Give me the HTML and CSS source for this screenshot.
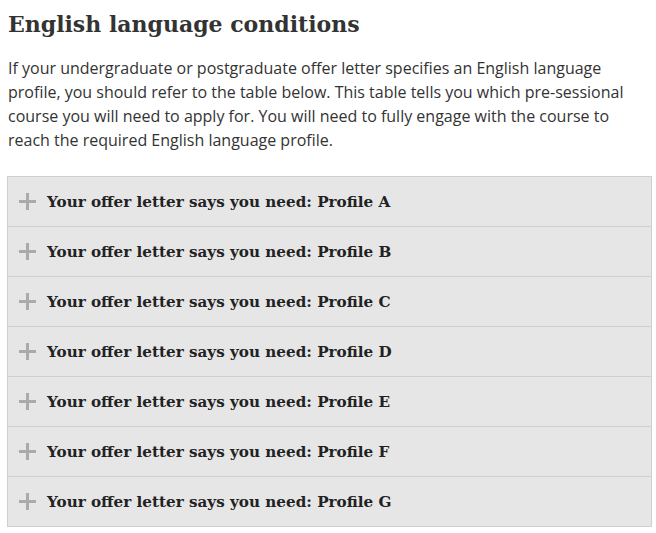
FILE: index.html
```html
<!DOCTYPE html>
<html>
<head>
<meta charset="utf-8">
<link rel="stylesheet" href="styles.css">
</head>
<body>
<h2 class="title">English language conditions</h2>
<p class="intro">If your undergraduate or postgraduate offer letter specifies an English language profile, you should refer to the table below. This table tells you which pre-sessional course you will need to apply for. You will need to fully engage with the course to reach the required English language profile.</p>
<div class="accordion">
  <div class="row"><span class="plus"></span><span class="label">Your offer letter says you need: Profile A</span></div>
  <div class="row"><span class="plus"></span><span class="label">Your offer letter says you need: Profile B</span></div>
  <div class="row"><span class="plus"></span><span class="label">Your offer letter says you need: Profile C</span></div>
  <div class="row"><span class="plus"></span><span class="label">Your offer letter says you need: Profile D</span></div>
  <div class="row"><span class="plus"></span><span class="label">Your offer letter says you need: Profile E</span></div>
  <div class="row"><span class="plus"></span><span class="label">Your offer letter says you need: Profile F</span></div>
  <div class="row"><span class="plus"></span><span class="label">Your offer letter says you need: Profile G</span></div>
</div>
</body>
</html>
```
FILE: styles.css
```css
html, body { background: #fff; }
body {
  margin: 0;
  padding: 8px 4px 0 8px;
  color: #333;
  font-family: "Open Sans", sans-serif;
}
.title {
  margin: 0;
  font-family: "DejaVu Serif", serif;
  font-weight: bold;
  font-size: 22px;
  line-height: 32px;
  color: #333;
}
.intro {
  margin: 16px 0 24px 0;
  font-size: 16px;
  line-height: 24px;
}
.accordion {
  margin-left: -1px;
  border: 1px solid #cfcfcf;
  background: #e6e6e6;
  width: 643px;
}
.row {
  height: 49px;
  display: flex;
  align-items: center;
  border-top: 1px solid #cfcfcf;
  padding-left: 11px;
}
.row:first-child { border-top: none; }
.plus {
  position: relative;
  width: 17px;
  height: 17px;
  margin-right: 11px;
}
.plus::before, .plus::after {
  content: "";
  position: absolute;
  background: #aaa;
}
.plus::before { left: 0; right: 0; top: 7px; height: 3px; }
.plus::after { top: 0; bottom: 0; left: 7px; width: 3px; }
.label {
  font-family: "DejaVu Serif", serif;
  font-weight: bold;
  font-size: 15.2px;
  color: #222;
}
```
